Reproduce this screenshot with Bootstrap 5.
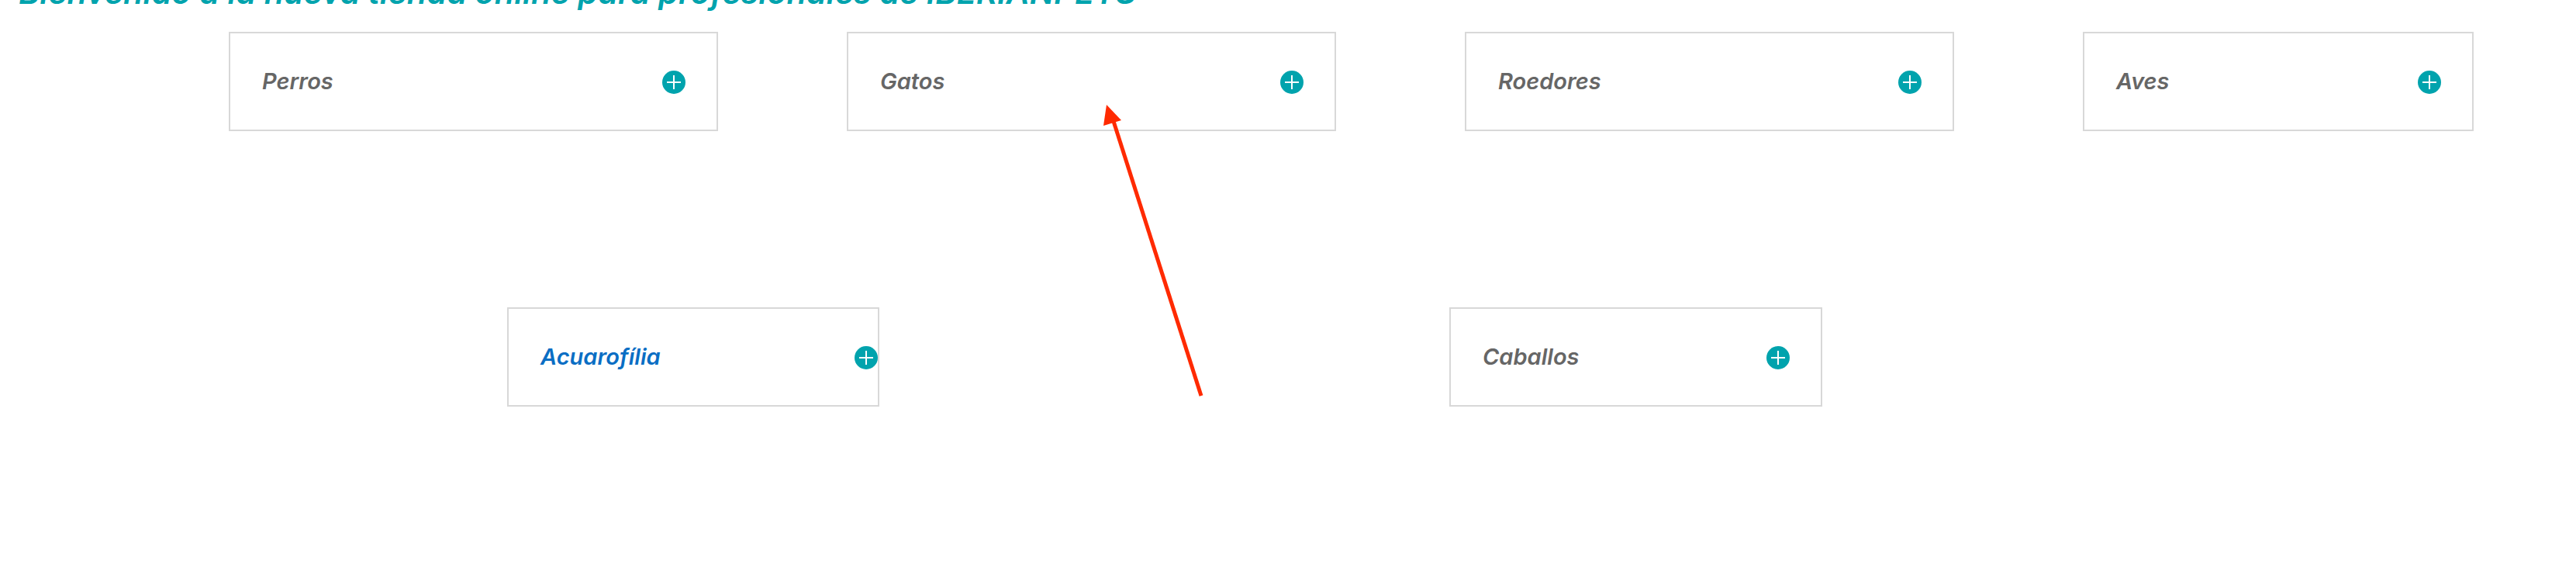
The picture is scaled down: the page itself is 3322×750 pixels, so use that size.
<!DOCTYPE html>
<html lang="es">
<head>
  <meta charset="UTF-8">
  <meta name="viewport" content="width=device-width, initial-scale=1.0">
  <title>IBERIANPETS</title>
  <link rel="stylesheet" href="https://cdn.jsdelivr.net/npm/bootstrap@5.3.0/dist/css/bootstrap.min.css">
  <style>
    body { background: #fff; overflow: hidden; font-family: "Inter", "Liberation Sans", sans-serif; }
    .page-wrap { position: relative; width: 3322px; height: 750px; overflow: hidden; }
    .welcome { margin: -34px 0 0 24px; height: 44px; font-size: 41.5px; line-height: 48px; font-style: italic; font-weight: 600; color: #00a3ad; white-space: nowrap; }
    .cat-row { padding-left: 295px; margin-top: 31px; gap: 166px; }
    .cat-row-2 { padding-left: 654px; margin-top: 227px; gap: 735px; }
    .cat-box { height: 128px; padding-left: 41px; border: 2px solid #d8d8d8; background: #fff; }
    .cat-name { font-size: 29px; font-style: italic; font-weight: 600; color: #666; }
    .cat-name-active { color: #0a6ec4; }
    .plus-ico { width: 30px; height: 30px; flex: none; margin-top: 2px; }
    .w-631 { width: 631px; padding-right: 40px; }
    .w-504 { width: 504px; padding-right: 40px; }
    .w-480 { width: 480px; padding-right: 0; }
    .w-481 { width: 481px; padding-right: 40px; }
    .arrow-over { position: absolute; left: 0; top: 0; pointer-events: none; }
  </style>
</head>
<body>
  <div class="page-wrap">
    <h1 class="welcome">Bienvenido a la nueva tienda online para profesionales de IBERIANPETS</h1>

    <div class="cat-row d-flex">
      <div class="cat-box w-631 d-flex align-items-center justify-content-between">
        <span class="cat-name">Perros</span>
        <svg class="plus-ico" viewBox="0 0 30 30"><circle cx="15" cy="15" r="15" fill="#00a3ad"/><path d="M15 6v18M6 15h18" stroke="#fff" stroke-width="2"/></svg>
      </div>
      <div class="cat-box w-631 d-flex align-items-center justify-content-between">
        <span class="cat-name">Gatos</span>
        <svg class="plus-ico" viewBox="0 0 30 30"><circle cx="15" cy="15" r="15" fill="#00a3ad"/><path d="M15 6v18M6 15h18" stroke="#fff" stroke-width="2"/></svg>
      </div>
      <div class="cat-box w-631 d-flex align-items-center justify-content-between">
        <span class="cat-name">Roedores</span>
        <svg class="plus-ico" viewBox="0 0 30 30"><circle cx="15" cy="15" r="15" fill="#00a3ad"/><path d="M15 6v18M6 15h18" stroke="#fff" stroke-width="2"/></svg>
      </div>
      <div class="cat-box w-504 d-flex align-items-center justify-content-between">
        <span class="cat-name">Aves</span>
        <svg class="plus-ico" viewBox="0 0 30 30"><circle cx="15" cy="15" r="15" fill="#00a3ad"/><path d="M15 6v18M6 15h18" stroke="#fff" stroke-width="2"/></svg>
      </div>
    </div>

    <div class="cat-row-2 d-flex">
      <div class="cat-box w-480 d-flex align-items-center justify-content-between">
        <span class="cat-name cat-name-active">Acuarofília</span>
        <svg class="plus-ico" viewBox="0 0 30 30"><circle cx="15" cy="15" r="15" fill="#00a3ad"/><path d="M15 6v18M6 15h18" stroke="#fff" stroke-width="2"/></svg>
      </div>
      <div class="cat-box w-481 d-flex align-items-center justify-content-between">
        <span class="cat-name">Caballos</span>
        <svg class="plus-ico" viewBox="0 0 30 30"><circle cx="15" cy="15" r="15" fill="#00a3ad"/><path d="M15 6v18M6 15h18" stroke="#fff" stroke-width="2"/></svg>
      </div>
    </div>

    <!-- red annotation arrow drawn over the page -->
    <svg class="arrow-over" width="3322" height="750" viewBox="0 0 3322 750">
      <path d="M1549 510L1434 150" stroke="#ff2a00" stroke-width="5" fill="none"/>
      <path d="M1427 135L1446 155L1423 162Z" fill="#ff2a00"/>
    </svg>
  </div>
  <script src="https://cdn.jsdelivr.net/npm/bootstrap@5.3.0/dist/js/bootstrap.bundle.min.js"></script>
</body>
</html>
